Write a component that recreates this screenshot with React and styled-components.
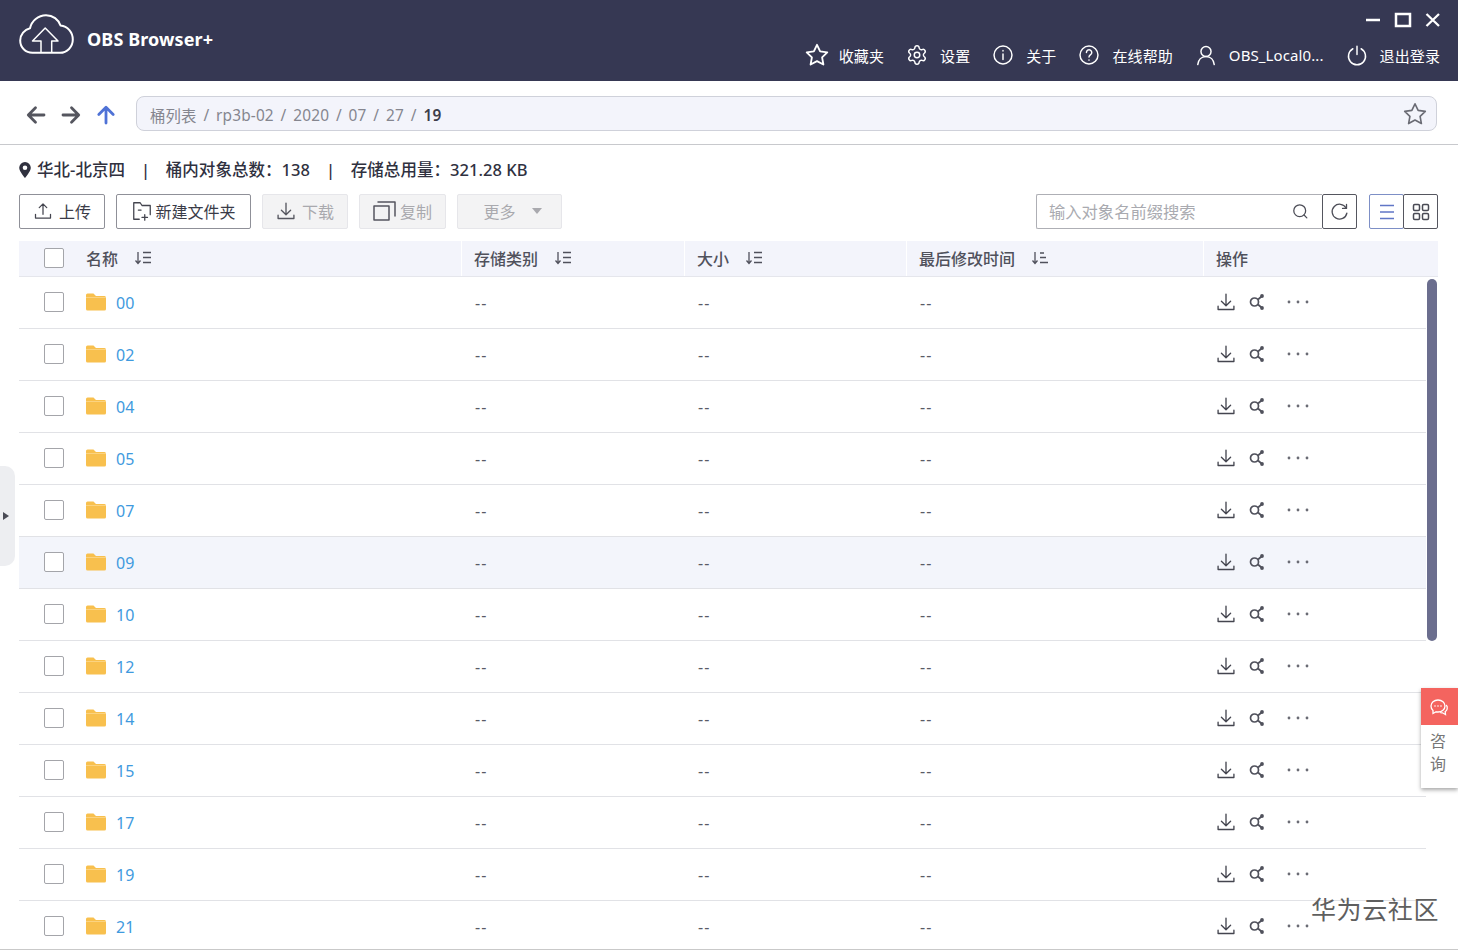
import React from "react";
import styled, { createGlobalStyle } from "styled-components";
import { Settings } from "lucide-react";

const Global = createGlobalStyle`
  html, body { margin: 0; padding: 0; background: #fff; }
  body { font-family: "Noto Sans", "Noto Sans CJK SC", sans-serif; }
  * { box-sizing: border-box; }
`;

const Page = styled.div`
  position: relative; width: 1458px; height: 950px; overflow: hidden; background: #fff;
  border-bottom: 1px solid #c9c9c9;
`;
const Header = styled.header`
  height: 81px; background: #363853; color: #fff; display: flex; justify-content: space-between;
  padding: 0 18px 0 19px;
`;
const Brand = styled.div`
  display: flex; align-items: center; gap: 13px; height: 78px;
`;
const BrandName = styled.span`
  font-size: 18px; font-weight: 700; letter-spacing: 0.1px;
`;
const HeaderRight = styled.div`
  display: flex; flex-direction: column; align-items: flex-end;
`;
const WindowBtns = styled.div`
  display: flex; align-items: center; gap: 13px; height: 39px; padding-top: 1px; margin-right: -1px;
`;
const HeaderNav = styled.nav`
  display: flex; align-items: center; height: 32px;
`;
const NavItem = styled.div`
  display: flex; align-items: center; gap: ${p => p.$inner ?? 12}px; font-size: 15px; margin-left: ${p => p.$gap ?? 22}px;
  white-space: nowrap; letter-spacing: 0.1px;
`;
const PathBar = styled.div`
  height: 64px; border-bottom: 1px solid #c8c9cd; display: flex; align-items: center;
  padding: 2px 21px 0 24px;
`;
const NavArrows = styled.div`
  display: flex; align-items: center; gap: 11px; margin: 2px 18px 0 0;
`;
const PathField = styled.div`
  flex: 1; height: 35px; background: #f3f4fb; border: 1px solid #cfd1da; border-radius: 8px;
  display: flex; align-items: center; justify-content: space-between; padding: 0 8px 0 13px;
  font-size: 15.4px; letter-spacing: 0.15px; color: #85868f;
`;
const Crumbs = styled.div`
  display: flex; align-items: center; gap: 6.8px; margin-top: 3px;
`;
const CrumbNow = styled.b`
  color: #3c3d4a; font-weight: 600;
`;
const Content = styled.main`
  padding: 0 20px 0 19px;
`;
const InfoBar = styled.div`
  height: 49px; padding-top: 12px; display: flex; align-items: flex-start; font-size: 16.5px; font-weight: 500;
  color: #30313f; line-height: 26px; letter-spacing: 0.05px;
`;
const InfoSep = styled.span`
  margin: 0 15.5px 0 16px; font-weight: 500;
`;
const Toolbar = styled.div`
  height: 47px; display: flex; align-items: flex-start;
`;
const ToolBtn = styled.div`
  height: 35px; width: ${p => p.$w}px; margin-right: ${p => p.$mr ?? 11}px; border-radius: 2px;
  display: flex; align-items: center; justify-content: center; gap: ${p => p.$gap ?? 6}px;
  padding: 0 0 2px ${p => p.$pl ?? 0}px;
  font-size: 16px;
  border: 1px solid ${p => p.$off ? "#e6e6ea" : "#8f9098"};
  background: ${p => p.$off ? "#f3f3f4" : "#fff"};
  color: ${p => p.$off ? "#a9a9ae" : "#3a3b47"};
`;
const Spacer = styled.div` flex: 1; `;
const SearchBox = styled.div`
  width: 286px; height: 35px; border: 1px solid #aeafb5; border-right: none; border-radius: 2px 0 0 2px;
  display: flex; align-items: center; justify-content: space-between; padding: 0 12px 1px 12px;
  font-size: 16.3px; color: #a9aab0;
`;
const SquareBtn = styled.div`
  width: ${p => p.$w ?? 35}px; height: 35px; display: flex; align-items: center; justify-content: center;
  border: 1px solid ${p => p.$active ? "#7d8fc6" : "#55565f"}; border-radius: 2px; margin-left: ${p => p.$ml ?? 0}px;
  background: #fff;
`;
const Cols = "442px 223px 222px 297px 1fr";
const HeadRow = styled.div`
  display: grid; grid-template-columns: ${Cols}; height: 36px; background: #f3f4fb;
  border-bottom: 1px solid #e5e6ec;
`;
const HeadCell = styled.div`
  display: flex; align-items: center; gap: 16px; padding: 0 0 2px ${p => p.$pl ?? 12}px; font-size: 16px; color: #50515c;
  font-weight: 500; border-left: ${p => p.$first ? "none" : "1px solid #fff"};
`;
const Box = styled.span`
  display: block; width: 20px; height: 20px; border: 1px solid #a4a5aa; border-radius: 2px; background: #fff;
  flex: none; margin-right: ${p => p.$mr ?? 22}px;
`;
const Row = styled.div`
  display: grid; grid-template-columns: ${Cols}; height: 52px; width: 1407px;
  border-bottom: 1px solid #e1e2e6; background: ${p => p.$hover ? "#f3f5fb" : "#fff"};
`;
const NameCell = styled.div`
  display: flex; align-items: center; padding-left: 25px; padding-bottom: 2px;
`;
const Cell = styled.div`
  display: flex; align-items: center; padding-left: 14px; font-size: 16px; letter-spacing: 1px; color: #5a5b65;
`;
const NameLink = styled.a`
  color: #3f9ade; font-size: 16px; margin-left: 9px; margin-top: 3px;
`;
const Ops = styled.div`
  display: flex; align-items: center; gap: 12px; padding-left: 13px; padding-bottom: 1px;
`;
const Scrollbar = styled.div`
  position: absolute; left: 1427px; top: 279px; width: 10px; height: 362px; border-radius: 5px; background: #6b6e8e;
`;
const SideHandle = styled.div`
  position: absolute; left: 0; top: 466px; width: 15px; height: 100px; background: #edeef1;
  border-radius: 0 10px 10px 0; display: flex; align-items: center; padding-left: 3px;
  &::after { content: ""; border-left: 6px solid #4a4b55; border-top: 4px solid transparent; border-bottom: 4px solid transparent; }
`;
const Consult = styled.div`
  position: absolute; left: 1421px; top: 688px; width: 37px; height: 100px; background: #fff;
  box-shadow: 0 2px 4px rgba(0,0,0,.35);
`;
const ConsultIcon = styled.div`
  height: 37px; background: #f4645f; display: flex; align-items: center; justify-content: center;
`;
const ConsultText = styled.div`
  font-size: 16px; color: #777; line-height: 23px; text-align: center; padding-top: 5px; width: 34px;
`;
const Watermark = styled.div`
  position: absolute; left: 1311px; top: 890px; font-size: 25px; line-height: 36px; color: #5f5f5f;
  letter-spacing: 0.6px; white-space: nowrap; font-family: "Noto Sans CJK SC", sans-serif;
`;

const Ic = ({ s = 22, c = "#fff", w = 1.6, children, v = 24 }) => (
  <svg width={s} height={s} viewBox={`0 0 ${v} ${v}`} fill="none" stroke={c} strokeWidth={w} strokeLinecap="round" strokeLinejoin="round" style={{ flex: "none", display: "block" }}>{children}</svg>
);
const Star = ({ s = 22, c = "#fff", w = 1.7 }) => (
  <Ic s={s} c={c} w={w}><path d="M12 2.600l2.900 6.100 6.600.9-4.800 4.600 1.200 6.600L12 17.600l-5.900 3.200 1.200-6.600L2.500 9.600l6.600-.9z" /></Ic>
);
const Logo = () => (
  <svg width="55" height="40" viewBox="0 0 55 40" fill="none" stroke="#fff" strokeWidth="2" strokeLinejoin="round" style={{ display: "block", marginTop: "-11px" }}>
    <path d="M13.500 38.800C6.500 38.800 1.200 33.500 1.200 26.500 1.200 20.500 5.500 15.500 11 14.300 12.500 6.800 19.300 1.200 27 1.200 34 1.200 39.500 5.500 41.500 11.500 48.800 12.200 53.800 18.500 53.800 25.500 53.800 33 48 38.800 41 38.800Z" />
    <path d="M22 38.800V27H13.500L26.200 14 39 27H32.700V38.800" strokeWidth="1.500" />
  </svg>
);
const Info = () => (
  <Ic><circle cx="12" cy="12" r="9.800" /><path d="M12 11v6M12 7v.6" /></Ic>
);
const Help = () => (
  <Ic><circle cx="12" cy="12" r="9.800" /><path d="M9.200 9.300a2.900 2.900 0 1 1 4.500 2.400c-1 .7-1.700 1.300-1.700 2.600M12 17.300v.3" /></Ic>
);
const User = () => (
  <Ic s={22}><circle cx="12" cy="8.200" r="5.500" /><path d="M3 22.500c.6-5 4-8.800 9-8.800s8.400 3.800 9 8.800" /></Ic>
);
const Power = () => (
  <Ic><path d="M12 2.500v9M7.500 5.200a9.300 9.300 0 1 0 9 0" /></Ic>
);
const Arrow = ({ dir, c = "#55565f" }) => {
  const r = { left: 0, right: 180, up: 90 }[dir];
  return (
    <svg width="24" height="24" viewBox="0 0 24 24" fill="none" stroke={c} strokeWidth="2.800" strokeLinecap="round" strokeLinejoin="round" style={{ transform: `rotate(${r}deg)`, display: "block" }}>
      <path d="M20 12H4.500M11.500 4.800L4.300 12l7.200 7.200" />
    </svg>
  );
};
const Upload = () => (
  <Ic s={20} c="#44454f" w={1.5}><path d="M12 16V3.500M7.500 8L12 3.500 16.500 8M3 16v4.500h18V16" /></Ic>
);
const Download = ({ c = "#44454f", s = 20 }) => (
  <Ic s={s} c={c} w={1.6}><path d="M12 2.500V16M6.500 11L12 16.500 17.500 11M2.500 17v4h19v-4" /></Ic>
);
const NewFolder = () => (
  <Ic s={22} c="#44454f" w={1.4}><path d="M9 21H3V3h7l2 3h9v10M15 16v6M12 19h6M8 11h3" /></Ic>
);
const Copy = () => (
  <Ic s={24} c="#55565f" w={1.5}><path d="M1 7h15v14H1zM5 3h17v14" /></Ic>
);
const SortIcon = ({ short }) => (
  <svg width="18" height="16" viewBox="0 0 18 16" fill="none" stroke="#50515c" strokeWidth="1.300" style={{ display: "block" }}>
    <path d="M4 2v11M1.500 10.500L4 13.500 6.500 10.500" />
    <path d={short ? "M9 3h4M9 7.500h6M9 12.500h8" : "M9 2.500h8M9 7.500h8M9 12.500h8"} />
  </svg>
);
const Search = () => (
  <Ic s={19} c="#4c4d57" w={1.6}><circle cx="11" cy="11" r="7.500" /><path d="M16.500 16.500L20 20" /></Ic>
);
const Refresh = () => (
  <Ic s={21} c="#4c4d57" w={1.5}><path d="M19.500 8a8.500 8.500 0 1 0 .9 6" /><path d="M20 4v4.500h-4.500" /></Ic>
);
const ListIcon = () => (
  <svg width="18" height="18" viewBox="0 0 18 18" fill="none" stroke="#6076c6" strokeWidth="1.600" style={{ display: "block" }}>
    <path d="M2 2.500h14M2 9h14M2 15.500h14" />
  </svg>
);
const GridIcon = () => (
  <svg width="18" height="18" viewBox="0 0 18 18" fill="none" stroke="#4a4b55" strokeWidth="1.500" style={{ display: "block" }}>
    <rect x="1.500" y="1.500" width="6" height="6" rx="1.200" />
    <rect x="10.500" y="1.500" width="6" height="6" rx="1.200" />
    <rect x="1.500" y="10.500" width="6" height="6" rx="1.200" />
    <rect x="10.500" y="10.500" width="6" height="6" rx="1.200" />
  </svg>
);
const Folder = () => (
  <svg width="22" height="20" viewBox="0 0 22 20" style={{ display: "block", flex: "none", marginLeft: "-1px" }}>
    <path d="M1 3a1.500 1.500 0 0 1 1.500-1.500h6L11 4h8.500A1.500 1.500 0 0 1 21 5.500V17a1.500 1.500 0 0 1-1.500 1.500h-17A1.500 1.500 0 0 1 1 17z" fill="#f8c04e" />
    <path d="M1 5.500h20" stroke="#fbd88d" strokeWidth="0.800" />
  </svg>
);
const Share = () => (
  <svg width="18" height="18" viewBox="0 0 18 18" fill="none" stroke="#50515c" strokeWidth="1.700" style={{ display: "block" }}>
    <circle cx="6.500" cy="9" r="4" />
    <path d="M10 6.500L13.500 3.500M10 11.500l3.500 3" />
    <circle cx="14" cy="3" r="1.900" fill="#50515c" stroke="none" />
    <circle cx="14" cy="15" r="1.900" fill="#50515c" stroke="none" />
  </svg>
);
const Dots = () => (
  <svg width="24" height="6" viewBox="0 0 24 6" fill="#6a6b74" style={{ display: "block", marginLeft: "8px" }}>
    <circle cx="3" cy="3" r="1.400" /><circle cx="12" cy="3" r="1.400" /><circle cx="21" cy="3" r="1.400" />
  </svg>
);
const Chat = () => (
  <svg width="20" height="20" viewBox="0 0 20 20" fill="none" stroke="#fff" strokeWidth="1.300" style={{ display: "block", marginLeft: "-1px", marginTop: "3px" }}>
    <path d="M9 2c4 0 7 2.600 7 6s-3 6-7 6c-.6 0-1.200 0-1.800-.2L4 15.500v-3C2.600 11.400 2 9.900 2 8c0-3.400 3-6 7-6z" />
    <path d="M17.200 7c1 1 1.300 2.400 1 3.800-.3 1.300-1 2.200-2 2.800l.3 2.900-3-1.700c-1 .1-1.800 0-2.500-.3" />
    <circle cx="6" cy="8" r=".8" fill="#fff" stroke="none" /><circle cx="9" cy="8" r=".8" fill="#fff" stroke="none" /><circle cx="12" cy="8" r=".8" fill="#fff" stroke="none" />
  </svg>
);

const rows = ["00", "02", "04", "05", "07", "09", "10", "12", "14", "15", "17", "19", "21"];
const WinBtn = styled.svg` display: block; `;

export default function App() {
  return (
    <Page>
      <Global />
      <Header>
        <Brand>
          <Logo />
          <BrandName>OBS Browser+</BrandName>
        </Brand>
        <HeaderRight>
          <WindowBtns>
            <WinBtn width="16" height="16" viewBox="0 0 16 16"><path d="M1 8h14" stroke="#fff" strokeWidth="2.500" /></WinBtn>
            <WinBtn width="18" height="16" viewBox="0 0 18 16"><rect x="2" y="2" width="14" height="12" fill="none" stroke="#fff" strokeWidth="2.500" /></WinBtn>
            <WinBtn width="16" height="16" viewBox="0 0 16 16"><path d="M1.500 2l12.500 12M14 2L1.500 14" stroke="#fff" strokeWidth="2.300" /></WinBtn>
          </WindowBtns>
          <HeaderNav>
            <NavItem $gap={0} $inner={9}><Star s={26} />收藏夹</NavItem>
            <NavItem $gap={22}><Settings size={22} strokeWidth={1.6} />设置</NavItem>
            <NavItem $gap={22}><Info />关于</NavItem>
            <NavItem $gap={22}><Help />在线帮助</NavItem>
            <NavItem $gap={22}><User />OBS_Local0...</NavItem>
            <NavItem $gap={22}><Power />退出登录</NavItem>
          </HeaderNav>
        </HeaderRight>
      </Header>
      <PathBar>
        <NavArrows>
          <Arrow dir="left" />
          <Arrow dir="right" />
          <Arrow dir="up" c="#4f72d6" />
        </NavArrows>
        <PathField>
          <Crumbs>
            <span>桶列表</span><span>/</span><span>rp3b-02</span><span>/</span><span>2020</span><span>/</span><span>07</span><span>/</span><span>27</span><span>/</span><CrumbNow>19</CrumbNow>
          </Crumbs>
          <Star s={26} c="#6a6b74" w={1.5} />
        </PathField>
      </PathBar>
      <Content>
        <InfoBar>
          <svg width="12" height="16" viewBox="0 0 12 16" style={{ margin: "5px 6px 0 0", flex: "none" }}>
            <path fillRule="evenodd" d="M6 0a5.800 5.800 0 0 1 5.800 5.800C11.800 9.500 6 16 6 16S.2 9.500.2 5.800A5.800 5.800 0 0 1 6 0zm0 3.500a2.300 2.300 0 1 0 0 4.600 2.300 2.300 0 0 0 0-4.600z" fill="#30313f" />
          </svg>
          <span>华北-北京四</span><InfoSep>|</InfoSep>
          <span>桶内对象总数：138</span><InfoSep>|</InfoSep>
          <span>存储总用量：321.28 KB</span>
        </InfoBar>
        <Toolbar>
          <ToolBtn $w={86}><Upload />上传</ToolBtn>
          <ToolBtn $w={135} $gap={2}><NewFolder />新建文件夹</ToolBtn>
          <ToolBtn $w={86} $off><Download c="#55565f" />下载</ToolBtn>
          <ToolBtn $w={87} $off $gap={3}><Copy />复制</ToolBtn>
          <ToolBtn $w={105} $off $gap={16} $pl={6}>更多
            <svg width="10" height="6" viewBox="0 0 10 6" style={{ display: "block" }}><path d="M0 0h10L5 6z" fill="#a9a9ae" /></svg>
          </ToolBtn>
          <Spacer />
          <SearchBox>输入对象名前缀搜索<Search /></SearchBox>
          <SquareBtn><Refresh /></SquareBtn>
          <SquareBtn $ml={12} $active><ListIcon /></SquareBtn>
          <SquareBtn $ml={-1}><GridIcon /></SquareBtn>
        </Toolbar>
        <HeadRow>
          <HeadCell $first $pl={25}><Box $mr={6} />名称<SortIcon /></HeadCell>
          <HeadCell>存储类别<SortIcon /></HeadCell>
          <HeadCell>大小<SortIcon /></HeadCell>
          <HeadCell>最后修改时间<SortIcon short /></HeadCell>
          <HeadCell>操作</HeadCell>
        </HeadRow>
        {rows.map(n => (
          <Row key={n} $hover={n === "09"}>
            <NameCell>
              <Box />
              <Folder /><NameLink>{n}</NameLink>
            </NameCell>
            <Cell>--</Cell>
            <Cell>--</Cell>
            <Cell>--</Cell>
            <Ops><Download /><Share /><Dots /></Ops>
          </Row>
        ))}
      </Content>
      <Scrollbar />
      <SideHandle />
      <Consult>
        <ConsultIcon><Chat /></ConsultIcon>
        <ConsultText>咨<br />询</ConsultText>
      </Consult>
      <Watermark>华为云社区</Watermark>
    </Page>
  );
}
